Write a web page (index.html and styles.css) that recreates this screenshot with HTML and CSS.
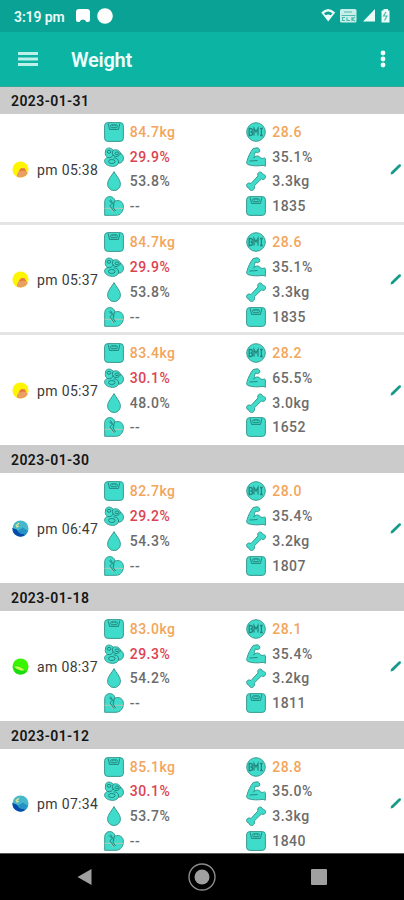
FILE: index.html
```html
<!DOCTYPE html>
<html lang="en">
<head>
<meta charset="utf-8">
<title>Weight</title>
<link rel="stylesheet" href="styles.css">
</head>
<body>
<svg class="defs" aria-hidden="true">
  <symbol id="scale" viewBox="0 0 20 20"><rect class="ink" x=".6" y=".6" width="18.8" height="18.8" rx="3.2"/><path class="line" d="M4.200 1.500 5.500 7.400h9l1.300-5.900"/><rect class="line" x="6.700" y="2.800" width="6.600" height="2.900" rx="1"/><path class="line" d="M8.800 3v1.300M11.200 3v1.300"/></symbol>
  <symbol id="fat" viewBox="0 0 20 20"><path class="ink" d="M1.500 5C1 2 4 .3 6.500 1.300 8 1.800 8.500 2.800 9.500 3.200c3-1.200 6 .3 7 3 2.500 1.200 3.500 4 2.700 6.800-.8 2.300-2.500 3.200-4.700 3.200-1.500 2.800-5 3.800-8.500 2.800-4-.8-6-3.500-5.200-6 .4-1.300 1.200-2 2.700-2.500C1.500 9 .8 7 1.500 5z"/><path class="line" d="M3.500 10.500c3 .7 5-.7 6-3M9.500 3.200C7.500 5 8 9 12 9.500c2.500 0 4-1.500 4.500-3.300M14.500 16.200c.5-3.500-1.500-5.500-5-5.200"/><ellipse class="line" cx="5" cy="4.800" rx="1.800" ry="1.500"/><ellipse class="line" cx="13" cy="6.300" rx="2" ry="1.300"/><ellipse class="line" cx="7.800" cy="14.500" rx="3.300" ry="2"/></symbol>
  <symbol id="water" viewBox="0 0 20 20"><path class="ink" d="M10 .6C8 4.600 3.600 8.300 3.600 13.200a6.400 6.300 0 0 0 12.800 0C16.400 8.300 12 4.600 10 .6z"/></symbol>
  <symbol id="heart" viewBox="0 0 20 20"><path class="ink" d="M.7 19.300V5.500C1 2.500 3 .6 5.800.6c2.700 0 4.600 1.600 5.200 4.400 4.500-1.700 8.400 1 8.400 5.500 0 5-2.900 8.800-7.500 8.800z"/><path class="pulse" d="M.7 12.400h6.500l1.500 3 2-3h8.700"/><path class="line" d="M5.200 4.500 8 7.500 6 9.800l4 5.700M6.500 3.500l3.500 6M10.500 5 9 11l2.500 4"/></symbol>
  <symbol id="bmi" viewBox="0 0 20 20"><circle class="ink" cx="10" cy="10" r="9.300"/><path class="line heavy" d="M3.200 6.500v7h1.300c2.700 0 2.700-3.500 0-3.500 2.500 0 2.500-3.500 0-3.500zM8 13.500v-7l2 3.500 2-3.500v7M14 6.500h2.800M14 13.500h2.800M15.400 6.500v7"/></symbol>
  <symbol id="muscle" viewBox="0 0 20 20"><path class="ink" d="M7.200 1.500 11 .8c2 0 3 1.800 2.800 3.700l-2.400 1.200-1.800-.8C8.600 6.500 8.300 8 8.700 9.800c1.800-1.300 4.500-1 5.600.8.800 1 2.500 1 4.200.3l.9.8v7.500l-2.300-.9c-4.500.8-10.800.9-15.300-.8-1.200-.8-1.400-2.200-.7-3.800C2.200 9.600 4.200 5.200 7.200 1.500z"/><path class="line" d="M3.500 14c2.700.3 5.500-.7 8-.5M8.700 9.800 7.300 11.300"/></symbol>
  <symbol id="bone" viewBox="0 0 20 20"><path class="ink" d="M12 4.900C10.800 2 13.900-.2 15.900 1.800c.4.400.6.900.7 1.400 3.200 0 4.200 3.700 1.400 5-1 .4-1.900.2-2.700-.2L8.400 14.800c1.100 2.800-1.300 5.500-3.900 4.500-.9-.4-1.400-1.200-1.500-2.200-3.100-.5-3.200-4.300-.5-5 .9-.2 1.800 0 2.500.4z"/></symbol>
  <symbol id="pencil" viewBox="0 0 12 12"><path d="M.6 11.500 1 9.100 8.800 1.600q.9-.8 1.800 0t0 1.900L3 11z"/></symbol>
  <symbol id="sunset" viewBox="0 0 18 18"><circle cx="9" cy="9" r="8.500" fill="#fff500"/><path d="M5 16.300c.2-2 1-4 2.500-6 2-2.600 5-2.900 7-.6l2.100 3.200A8.500 8.500 0 0 1 5 16.300z" fill="#eaa062"/><path d="M7.500 9.800 10 7.500l3.500.2 1.500 3-3.300-.5-3 1z" fill="#e57946"/></symbol>
  <symbol id="night" viewBox="0 0 18 18"><circle cx="9" cy="9" r="8.500" fill="#46b8cc"/><path d="M.5 8.500 5 10l3 3.800 6.500 1.700A8.500 8.500 0 0 1 .5 8.500z" fill="#064bac"/><path d="M6 11.500 11.500 8l5.500 3.500-2.500 4L8 13.800z" fill="#2494c4"/><path d="M4 6 7.500 3.500M4.500 7.500 7 6.500" fill="none" stroke="#f0e789" stroke-width="1.300"/></symbol>
  <symbol id="morning" viewBox="0 0 18 18"><circle cx="9" cy="9" r="8.500" fill="#39f500"/><path d="M1 8.500c5-1.800 9 .5 13.500 5L16 14c-3 4-9 4.500-12.500 1.500z" fill="#19dc12"/><path d="M2 9.200c5-1.400 8 1 11.500 4-3.700.3-7.500-.3-11.500-4z" fill="#caff54"/></symbol>
</svg>

<main class="screen">
  <div class="status">
    <span class="clock">3:19 pm</span>
    <svg class="notes" viewBox="0 0 38 16"><path d="M0 4q0-3 3-3h8q3 0 3 3v8q0 2-2 2h-1.500q-1-2.500-3.500-2.500T3.500 14H2q-2 0-2-2z"/><circle cx="29" cy="8" r="7.800"/></svg>
    <svg class="signals" viewBox="0 0 70 16"><path d="M.2 4.500q7-7 14 0L7.200 13.500z"/><path class="cut" d="M3 5.200q4.200-3.200 8.400 0L9.800 7.200q-2.600-1.600-5.200 0z"/><rect x="19" y="1" width="16.500" height="13.500" rx="1.500" opacity=".85"/><path class="mark" d="M23 4h8M20.500 7.500h14M24 9.500h-2.500v3H24M26 9.500v3h3M31 9v4M34 9l-3 2 3 2"/><path d="M54 1v12.500H42z"/><path d="M62.500 1h4.500v1.500h1.500v12H60.500v-12h2z"/><path class="mark" d="m65 4-2.500 4H66l-2.500 4.500"/></svg>
  </div>
  <header class="appbar">
    <svg class="menu" viewBox="0 0 20 16"><path d="M0 2.500h20M0 8h20M0 13.500h20"/></svg>
    <h1>Weight</h1>
    <svg class="more" viewBox="0 0 6 18"><circle cx="3" cy="3" r="2.400"/><circle cx="3" cy="9" r="2.400"/><circle cx="3" cy="15" r="2.400"/></svg>
  </header>

  <div class="log">
    <h2>2023-01-31</h2>
    <section class="entry divided">
      <svg class="phase"><use href="#sunset"/></svg><time>pm 05:38</time>
      <ul class="metrics">
        <li class="high"><svg><use href="#scale"/></svg>84.7kg</li><li class="high"><svg><use href="#bmi"/></svg>28.6</li>
        <li class="alert"><svg><use href="#fat"/></svg>29.9%</li><li><svg><use href="#muscle"/></svg>35.1%</li>
        <li><svg><use href="#water"/></svg>53.8%</li><li><svg><use href="#bone"/></svg>3.3kg</li>
        <li><svg><use href="#heart"/></svg>--</li><li><svg><use href="#scale"/></svg>1835</li>
      </ul>
      <svg class="edit"><use href="#pencil"/></svg>
    </section>
    <section class="entry divided">
      <svg class="phase"><use href="#sunset"/></svg><time>pm 05:37</time>
      <ul class="metrics">
        <li class="high"><svg><use href="#scale"/></svg>84.7kg</li><li class="high"><svg><use href="#bmi"/></svg>28.6</li>
        <li class="alert"><svg><use href="#fat"/></svg>29.9%</li><li><svg><use href="#muscle"/></svg>35.1%</li>
        <li><svg><use href="#water"/></svg>53.8%</li><li><svg><use href="#bone"/></svg>3.3kg</li>
        <li><svg><use href="#heart"/></svg>--</li><li><svg><use href="#scale"/></svg>1835</li>
      </ul>
      <svg class="edit"><use href="#pencil"/></svg>
    </section>
    <section class="entry">
      <svg class="phase"><use href="#sunset"/></svg><time>pm 05:37</time>
      <ul class="metrics">
        <li class="high"><svg><use href="#scale"/></svg>83.4kg</li><li class="high"><svg><use href="#bmi"/></svg>28.2</li>
        <li class="alert"><svg><use href="#fat"/></svg>30.1%</li><li><svg><use href="#muscle"/></svg>65.5%</li>
        <li><svg><use href="#water"/></svg>48.0%</li><li><svg><use href="#bone"/></svg>3.0kg</li>
        <li><svg><use href="#heart"/></svg>--</li><li><svg><use href="#scale"/></svg>1652</li>
      </ul>
      <svg class="edit"><use href="#pencil"/></svg>
    </section>
    <h2>2023-01-30</h2>
    <section class="entry">
      <svg class="phase"><use href="#night"/></svg><time>pm 06:47</time>
      <ul class="metrics">
        <li class="high"><svg><use href="#scale"/></svg>82.7kg</li><li class="high"><svg><use href="#bmi"/></svg>28.0</li>
        <li class="alert"><svg><use href="#fat"/></svg>29.2%</li><li><svg><use href="#muscle"/></svg>35.4%</li>
        <li><svg><use href="#water"/></svg>54.3%</li><li><svg><use href="#bone"/></svg>3.2kg</li>
        <li><svg><use href="#heart"/></svg>--</li><li><svg><use href="#scale"/></svg>1807</li>
      </ul>
      <svg class="edit"><use href="#pencil"/></svg>
    </section>
    <h2>2023-01-18</h2>
    <section class="entry">
      <svg class="phase"><use href="#morning"/></svg><time>am 08:37</time>
      <ul class="metrics">
        <li class="high"><svg><use href="#scale"/></svg>83.0kg</li><li class="high"><svg><use href="#bmi"/></svg>28.1</li>
        <li class="alert"><svg><use href="#fat"/></svg>29.3%</li><li><svg><use href="#muscle"/></svg>35.4%</li>
        <li><svg><use href="#water"/></svg>54.2%</li><li><svg><use href="#bone"/></svg>3.2kg</li>
        <li><svg><use href="#heart"/></svg>--</li><li><svg><use href="#scale"/></svg>1811</li>
      </ul>
      <svg class="edit"><use href="#pencil"/></svg>
    </section>
    <h2>2023-01-12</h2>
    <section class="entry">
      <svg class="phase"><use href="#night"/></svg><time>pm 07:34</time>
      <ul class="metrics">
        <li class="high"><svg><use href="#scale"/></svg>85.1kg</li><li class="high"><svg><use href="#bmi"/></svg>28.8</li>
        <li class="alert"><svg><use href="#fat"/></svg>30.1%</li><li><svg><use href="#muscle"/></svg>35.0%</li>
        <li><svg><use href="#water"/></svg>53.7%</li><li><svg><use href="#bone"/></svg>3.3kg</li>
        <li><svg><use href="#heart"/></svg>--</li><li><svg><use href="#scale"/></svg>1840</li>
      </ul>
      <svg class="edit"><use href="#pencil"/></svg>
    </section>
  </div>

  <nav class="navbar">
    <svg viewBox="0 0 28 28"><path d="M20.500 6v16L6.500 14z"/></svg>
    <svg viewBox="0 0 28 28"><circle class="ring" cx="14" cy="14" r="13"/><circle cx="14" cy="14" r="7.500"/></svg>
    <svg viewBox="0 0 28 28"><rect x="6" y="6" width="16" height="16" rx="1"/></svg>
  </nav>
</main>
</body>
</html>
```

FILE: styles.css
```css
* { box-sizing: border-box; }
body { margin: 0; background: #fff; font-family: Roboto, sans-serif; }
.defs { position: absolute; width: 0; height: 0; }

.screen { width: 404px; height: 900px; display: flex; flex-direction: column; overflow: hidden; }

.status { height: 32px; flex: none; display: flex; align-items: center; padding: 0 13px 0 14px; background: #0aa294; color: #e9fbf8; }
.clock { width: 62px; font-size: 14px; font-weight: 600; letter-spacing: -.1px; line-height: 30px; padding-top: 2px; white-space: nowrap; }
.notes { width: 38px; height: 16px; fill: #fff; }
.signals { width: 70px; height: 16px; margin-left: auto; fill: #e9fbf8; }
.signals .cut { fill: #0aa294; }
.signals .mark { fill: none; stroke: #4eb9ad; stroke-width: 1.2; }

.appbar { height: 55px; flex: none; display: flex; align-items: center; padding: 0 18px; background: #0cb4a4; border-bottom: 1px solid #35a79c; color: #effffc; }
.menu { width: 20px; height: 16px; fill: none; stroke: #bdf0e8; stroke-width: 3; }
.appbar h1 { margin: 2px 0 0 33px; font-size: 20px; line-height: 24px; font-weight: 600; letter-spacing: -.25px; }
.more { width: 6px; height: 18px; margin-left: auto; fill: #effffc; }

.log { flex: 1; min-height: 0; overflow: hidden; }
.log h2 { height: 28px; margin: 0; padding-left: 11px; background: #cbcbcb; color: #151515; font-size: 14px; font-weight: 600; line-height: 30px; letter-spacing: .42px; }
.log h2:first-child { height: 27px; line-height: 28px; }

.entry { height: 109.600px; display: flex; align-items: flex-start; padding: 5.500px 1px 0 12px; }
.entry.divided { height: 110.600px; border-bottom: 3px solid #e4e4e4; }
.entry.divided + .entry:not(.divided) { height: 110.300px; }
.phase { width: 17px; height: 17px; margin-top: 41px; flex: none; }
.entry time { width: 66px; margin: 41px 0 0 8px; color: #3a3a3a; font-size: 14px; font-weight: 450; line-height: 18px; letter-spacing: .35px; white-space: nowrap; }
.metrics { list-style: none; margin: 0; padding: 0; width: 286px; display: grid; grid-template-columns: 142.500px 143.500px; grid-auto-rows: 24.750px; }
.metrics li { display: flex; align-items: center; gap: 6px; padding-left: .7px; color: #6c6c6c; font-size: 14px; font-weight: 500; line-height: 20px; letter-spacing: .5px; }
.metrics svg { width: 20px; height: 20px; flex: none; }
.metrics .high { color: #f3a55b; }
.metrics .alert { color: #dc4250; }
.ink { fill: #3fdccb; stroke: #3b9a90; stroke-width: 1; stroke-linejoin: round; }
.line { fill: none; stroke: #23877f; stroke-width: 1; }
.line.heavy { stroke-width: 1.3; }
.pulse { fill: none; stroke: #9fc9b8; stroke-width: 1.2; }
.edit { width: 12px; height: 12px; margin: 43px 0 0 1px; flex: none; fill: #159b8a; }

.navbar { height: 47px; flex: none; display: flex; align-items: center; justify-content: space-between; padding: 0 71px 1px; background: #000; border-top: 1px solid #555; }
.navbar svg { width: 28px; height: 28px; fill: #a0a0a0; }
.navbar .ring { fill: none; stroke: #8b8b8b; stroke-width: 1.400; }
```
